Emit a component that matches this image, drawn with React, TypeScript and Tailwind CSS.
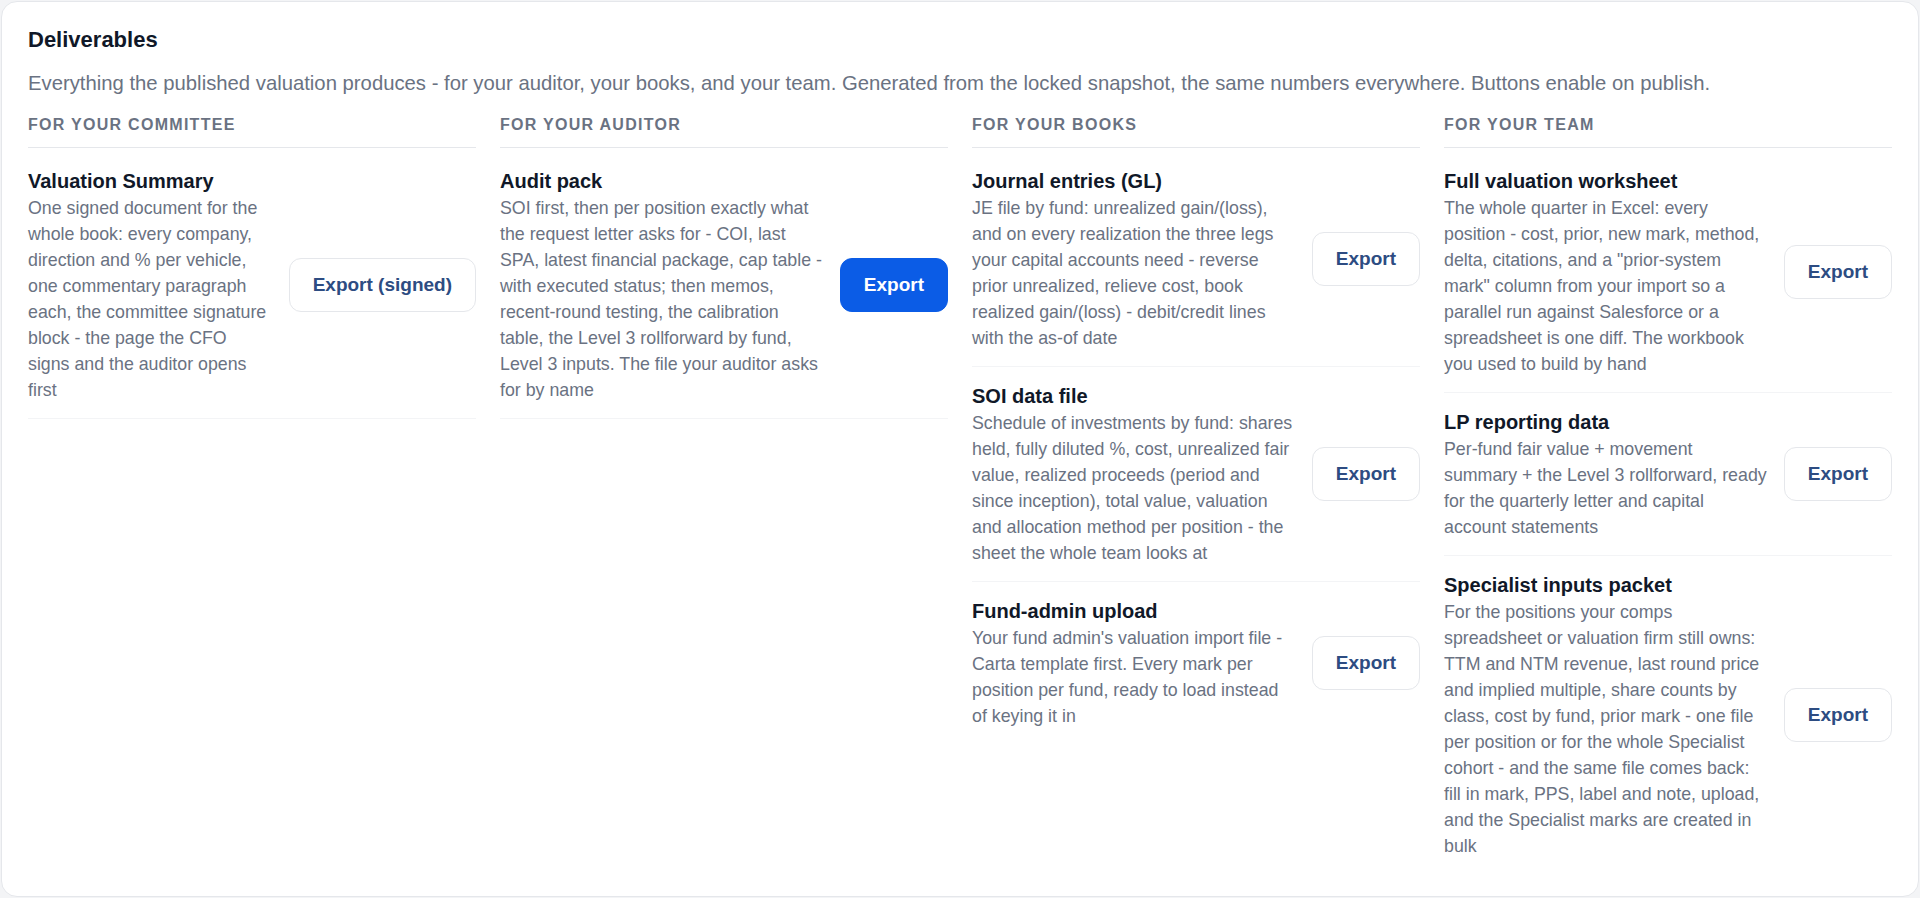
import React from 'react';

type Deliverable = {
  title: string;
  body: string;
  button: string;
  primary?: boolean;
};

type Column = {
  label: string;
  items: Deliverable[];
  closed?: boolean; // last row keeps its bottom rule
};

const COLUMNS: Column[] = [
  {
    label: 'For your committee',
    closed: true,
    items: [
      {
        title: 'Valuation Summary',
        body: 'One signed document for the whole book: every company, direction and % per vehicle, one commentary paragraph each, the committee signature block - the page the CFO signs and the auditor opens first',
        button: 'Export (signed)',
      },
    ],
  },
  {
    label: 'For your auditor',
    closed: true,
    items: [
      {
        title: 'Audit pack',
        body: 'SOI first, then per position exactly what the request letter asks for - COI, last SPA, latest financial package, cap table - with executed status; then memos, recent-round testing, the calibration table, the Level 3 rollforward by fund, Level 3 inputs. The file your auditor asks for by name',
        button: 'Export',
        primary: true,
      },
    ],
  },
  {
    label: 'For your books',
    items: [
      {
        title: 'Journal entries (GL)',
        body: 'JE file by fund: unrealized gain/(loss), and on every realization the three legs your capital accounts need - reverse prior unrealized, relieve cost, book realized gain/(loss) - debit/credit lines with the as-of date',
        button: 'Export',
      },
      {
        title: 'SOI data file',
        body: 'Schedule of investments by fund: shares held, fully diluted %, cost, unrealized fair value, realized proceeds (period and since inception), total value, valuation and allocation method per position - the sheet the whole team looks at',
        button: 'Export',
      },
      {
        title: 'Fund-admin upload',
        body: "Your fund admin's valuation import file - Carta template first. Every mark per position per fund, ready to load instead of keying it in",
        button: 'Export',
      },
    ],
  },
  {
    label: 'For your team',
    items: [
      {
        title: 'Full valuation worksheet',
        body: 'The whole quarter in Excel: every position - cost, prior, new mark, method, delta, citations, and a "prior-system mark" column from your import so a parallel run against Salesforce or a spreadsheet is one diff. The workbook you used to build by hand',
        button: 'Export',
      },
      {
        title: 'LP reporting data',
        body: 'Per-fund fair value + movement summary + the Level 3 rollforward, ready for the quarterly letter and capital account statements',
        button: 'Export',
      },
      {
        title: 'Specialist inputs packet',
        body: 'For the positions your comps spreadsheet or valuation firm still owns: TTM and NTM revenue, last round price and implied multiple, share counts by class, cost by fund, prior mark - one file per position or for the whole Specialist cohort - and the same file comes back: fill in mark, PPS, label and note, upload, and the Specialist marks are created in bulk',
        button: 'Export',
      },
    ],
  },
];

function ExportButton({ label, primary }: { label: string; primary?: boolean }) {
  return (
    <button
      className={
        primary
          ? 'shrink-0 rounded-xl border border-[#0b5ce6] bg-[#0b5ce6] px-[23px] py-[12px] text-[19px] leading-[28px] font-bold text-white'
          : 'shrink-0 rounded-xl border border-gray-200 bg-white px-[23px] py-[12px] text-[19px] leading-[28px] font-bold text-[#2d4c82]'
      }
    >
      {label}
    </button>
  );
}

function DeliverableRow({ item, ruled }: { item: Deliverable; ruled: boolean }) {
  return (
    <div className={`flex items-center gap-4 py-[15px] ${ruled ? 'border-b border-gray-100' : ''}`}>
      <div className="flex-1">
        <div className="text-[20px] leading-[28px] font-bold text-gray-900">{item.title}</div>
        <p className="text-[17.8px] leading-[26px] text-gray-500">{item.body}</p>
      </div>
      <ExportButton label={item.button} primary={item.primary} />
    </div>
  );
}

export default function App() {
  return (
    <div className="min-h-screen bg-gray-100 p-px" style={{ fontFamily: '"Liberation Sans", Arial, sans-serif' }}>
      <div className="h-[896px] rounded-2xl border border-gray-200 bg-white px-[26px] pt-[24px]">
        <h2 className="text-[22px] leading-[28px] font-bold text-gray-900">Deliverables</h2>
        <p className="mt-[15px] text-[20.3px] leading-[28px] text-gray-500">
          Everything the published valuation produces - for your auditor, your books, and your team. Generated from the locked snapshot, the same numbers everywhere. Buttons enable on publish.
        </p>

        <div className="mt-[18px] grid grid-cols-4 gap-6">
          {COLUMNS.map((col) => (
            <div key={col.label}>
              <div className="border-b border-gray-200 pb-3 text-[16px] leading-[20px] font-bold tracking-[0.08em] text-gray-500 uppercase">
                {col.label}
              </div>
              <div className="mt-[4px]">
                {col.items.map((item, i) => (
                  <DeliverableRow
                    key={item.title}
                    item={item}
                    ruled={col.closed || i < col.items.length - 1}
                  />
                ))}
              </div>
            </div>
          ))}
        </div>
      </div>
    </div>
  );
}
